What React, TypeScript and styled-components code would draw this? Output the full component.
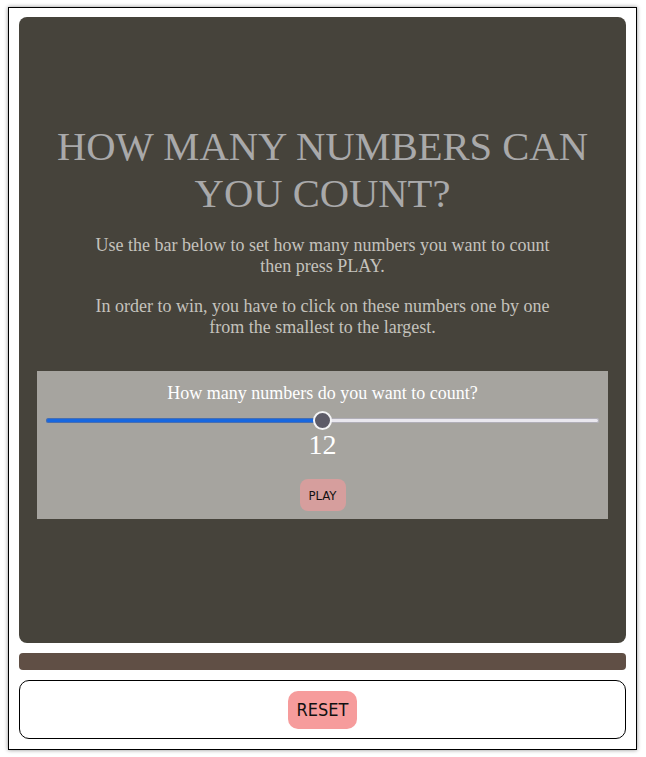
import React, { useState } from "react";
import styled, { createGlobalStyle } from "styled-components";

const Global = createGlobalStyle`
  html, body { margin: 0; padding: 0; background: #ffffff; }
  body { padding: 7px 9px 8px 8px; font-family: "Liberation Serif", "Times New Roman", serif; }
  * { box-sizing: border-box; }
`;

const Frame = styled.div`
  border: 1px solid #000;
  box-shadow: 0 0 4px rgba(0, 0, 0, 0.45);
  padding: 9px 10px 10px 10px;
  display: flex;
  flex-direction: column;
  gap: 10px;
  background: #fff;
`;

const Board = styled.div`
  background: #46433b;
  border-radius: 8px;
  height: 626px;
  padding: 106px 18px 0 18px;
  display: flex;
  flex-direction: column;
  align-items: center;
`;

const Title = styled.h1`
  margin: 0;
  font-family: "Liberation Serif", "Times New Roman", serif;
  font-weight: normal;
  font-size: 40.6px;
  line-height: 47px;
  color: #a9a9aa;
  text-align: center;
  max-width: 560px;
`;

const Text = styled.p<{ $top: number }>`
  margin: ${(p) => p.$top}px 0 0 0;
  max-width: 470px;
  font-size: 18px;
  line-height: 21px;
  color: #c4c2bd;
  text-align: center;
`;

const Settings = styled.div`
  margin-top: 33px;
  align-self: stretch;
  background: #a6a49f;
  padding: 12px 9px 8px 9px;
  display: flex;
  flex-direction: column;
  align-items: center;
`;

const Label = styled.div`
  font-size: 18px;
  line-height: 21px;
  color: #ffffff;
`;

const Range = styled.input<{ $pct: number }>`
  -webkit-appearance: none;
  appearance: none;
  width: 100%;
  height: 20px;
  margin: 6px 0 0 0;
  background: transparent;

  &::-webkit-slider-runnable-track {
    height: 5px;
    border-radius: 3px;
    background: linear-gradient(
      to right,
      #1767e0 0%,
      #1767e0 ${(p) => p.$pct}%,
      #e9e7ee ${(p) => p.$pct}%,
      #e9e7ee 100%
    );
    box-shadow: inset 0 0 0 1px rgba(120, 118, 128, 0.5);
  }
  &::-webkit-slider-thumb {
    -webkit-appearance: none;
    width: 19px;
    height: 19px;
    margin-top: -7px;
    border-radius: 50%;
    background: #5d5b68;
    border: 2px solid #f4f4f6;
  }
`;

const Value = styled.div`
  font-size: 28px;
  line-height: 30px;
  color: #ffffff;
  margin-top: 0;
`;

const Button = styled.button<{ $size: "small" | "large" }>`
  border: none;
  cursor: pointer;
  font-family: "DejaVu Sans Condensed", "DejaVu Sans", Tahoma, sans-serif;
  color: #111;
  background: ${(p) => (p.$size === "small" ? "#d69e9d" : "#f69c9c")};
  border-radius: ${(p) => (p.$size === "small" ? "8px" : "10px")};
  font-size: ${(p) => (p.$size === "small" ? "13px" : "18px")};
  padding: 0 9px;
  height: ${(p) => (p.$size === "small" ? "32px" : "38px")};
`;

const PlayRow = styled.div`
  margin-top: 19px;
`;

const Divider = styled.div`
  height: 17px;
  background: #604f45;
  border-radius: 4px;
`;

const Controls = styled.div`
  height: 59px;
  border: 1px solid #000;
  border-radius: 10px;
  display: flex;
  justify-content: center;
  align-items: center;
`;

export default function App() {
  const [count, setCount] = useState(12);
  const min = 2;
  const max = 22;
  const pct = ((count - min) / (max - min)) * 100;
  return (
    <>
      <Global />
      <Frame>
        <Board>
          <Title>HOW MANY NUMBERS CAN YOU COUNT?</Title>
          <Text $top={18}>
            Use the bar below to set how many numbers you want to count then press PLAY.
          </Text>
          <Text $top={19}>
            In order to win, you have to click on these numbers one by one from the smallest to the largest.
          </Text>
          <Settings>
            <Label>How many numbers do you want to count?</Label>
            <Range
              type="range"
              min={min}
              max={max}
              value={count}
              $pct={pct}
              onChange={(e) => setCount(Number(e.target.value))}
            />
            <Value>{count}</Value>
            <PlayRow>
              <Button $size="small">PLAY</Button>
            </PlayRow>
          </Settings>
        </Board>
        <Divider />
        <Controls>
          <Button $size="large">RESET</Button>
        </Controls>
      </Frame>
    </>
  );
}
